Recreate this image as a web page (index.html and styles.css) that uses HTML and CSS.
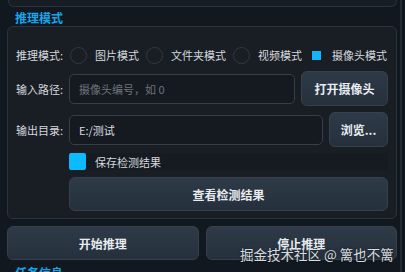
FILE: index.html
```html
<!DOCTYPE html>
<html lang="zh">
<head>
<meta charset="utf-8">
<link rel="stylesheet" href="styles.css">
</head>
<body>
<div class="page">
  <div class="main">
    <div class="prev-box"></div>
    <div class="section-title">推理模式</div>
    <div class="group">
      <div class="row mode-row">
        <span class="label">推理模式:</span>
        <span class="radio"></span><span class="opt">图片模式</span>
        <span class="radio"></span><span class="opt">文件夹模式</span>
        <span class="radio"></span><span class="opt">视频模式</span>
        <span class="radio checked"></span><span class="opt">摄像头模式</span>
      </div>
      <div class="row field-row r2">
        <span class="label">输入路径:</span>
        <div class="input placeholder">摄像头编号，如 0</div>
        <button class="btn btn-open">打开摄像头</button>
      </div>
      <div class="row field-row r3">
        <span class="label">输出目录:</span>
        <div class="input">E:/测试</div>
        <button class="btn btn-browse">浏览...</button>
      </div>
      <div class="row check-row">
        <span class="label"></span>
        <div class="check-wrap"><span class="checkbox"></span><span class="opt">保存检测结果</span></div>
      </div>
      <div class="row view-row">
        <span class="label"></span>
        <button class="btn btn-view">查看检测结果</button>
      </div>
    </div>
    <div class="actions">
      <button class="btn btn-big">开始推理</button>
      <button class="btn btn-big">停止推理</button>
    </div>
    <div class="section-title next">任务信息</div>
  </div>
  <div class="scrollbar"></div>
</div>
<div class="watermark">掘金技术社区 @ 篱也不篱</div>
</body>
</html>
```
FILE: styles.css
```css
html, body {
  margin: 0;
  padding: 0;
  background: #121820;
  font-family: "Noto Sans CJK SC", "Noto Sans", sans-serif;
  color: #d4d8dd;
  overflow: hidden;
}
.page {
  display: flex;
  width: 405px;
  height: 272px;
  overflow: hidden;
}
.main {
  width: 398px;
  flex: none;
}
.scrollbar {
  flex: 1;
  border-left: 2px solid #232b34;
  margin-left: 2px;
  background: #10161d;
}
.prev-box {
  margin-left: 8px;
  width: 389px;
  height: 7px;
  box-sizing: border-box;
  border: 1px solid #2a323c;
  border-top: none;
  border-radius: 0 0 6px 6px;
  background: #171d24;
}
.section-title {
  height: 19px;
  line-height: 21px;
  padding-left: 15px;
  font-size: 12px;
  font-weight: bold;
  color: #17a5e8;
}
.section-title.next {
  line-height: 17px;
  margin-top: 4px;
}
.group {
  margin-left: 7px;
  width: 390px;
  height: 193px;
  box-sizing: border-box;
  border: 1px solid #2b333d;
  border-radius: 6px;
  background: #191e25;
  padding: 19px 8px 0 8px;
  display: flex;
  flex-direction: column;
}
.row {
  display: flex;
  align-items: center;
}
.label {
  width: 53px;
  flex: none;
  font-size: 11px;
  color: #d4d8dd;
  white-space: nowrap;
}
.mode-row {
  height: 18px;
}
.mode-row .label {
  width: 54px;
}
.radio {
  width: 15px;
  height: 15px;
  border: 1px solid #323a44;
  border-radius: 50%;
  flex: none;
  margin-right: 8px;
}
.radio.checked {
  width: 9px;
  height: 9px;
  border: none;
  border-radius: 0;
  background: #12b5f7;
  margin-left: 3px;
  margin-right: 11px;
}
.opt {
  font-size: 11px;
  margin-right: 7px;
  color: #d4d8dd;
  white-space: nowrap;
  flex: none;
}
.field-row {
  height: 35px;
}
.r2 { margin-top: 7px; }
.r3 { margin-top: 6px; }
.input {
  height: 30px;
  box-sizing: border-box;
  border: 1px solid #363e48;
  border-radius: 5px;
  background: #151a21;
  font-size: 11px;
  line-height: 28px;
  padding-left: 9px;
  color: #d8dce0;
  margin-right: 6px;
  white-space: nowrap;
}
.r2 .input { width: 226px; }
.r3 .input { width: 254px; }
.input.placeholder { color: #6c737c; }
.btn {
  font-family: "Noto Sans CJK SC", "Noto Sans", sans-serif;
  font-size: 12px;
  font-weight: bold;
  color: #e8ecf0;
  background: linear-gradient(#2f3a48, #25303c);
  border: 1px solid #36414d;
  border-radius: 6px;
  box-sizing: border-box;
  padding: 0;
  margin: 0;
  white-space: nowrap;
}
.btn-open { width: 87px; height: 35px; }
.btn-browse { width: 59px; height: 35px; }
.check-row {
  margin-top: 6px;
  height: 17px;
}
.check-wrap {
  display: flex;
  align-items: center;
  flex: 1;
  height: 17px;
  background: #161b22;
}
.checkbox {
  width: 17px;
  height: 17px;
  border-radius: 2px;
  background: #0bbaff;
  margin-right: 9px;
  flex: none;
}
.view-row {
  margin-top: 7px;
}
.btn-view {
  flex: 1;
  height: 34px;
}
.actions {
  display: flex;
  gap: 7px;
  margin: 7px 0 0 7px;
  width: 390px;
}
.btn-big {
  flex: 1;
  height: 34px;
}
.watermark {
  position: absolute;
  left: 240px;
  top: 244px;
  font-size: 13.5px;
  color: rgba(235, 238, 242, 0.92);
  text-shadow: 0 0 2px rgba(0,0,0,0.6);
  white-space: nowrap;
}
```
